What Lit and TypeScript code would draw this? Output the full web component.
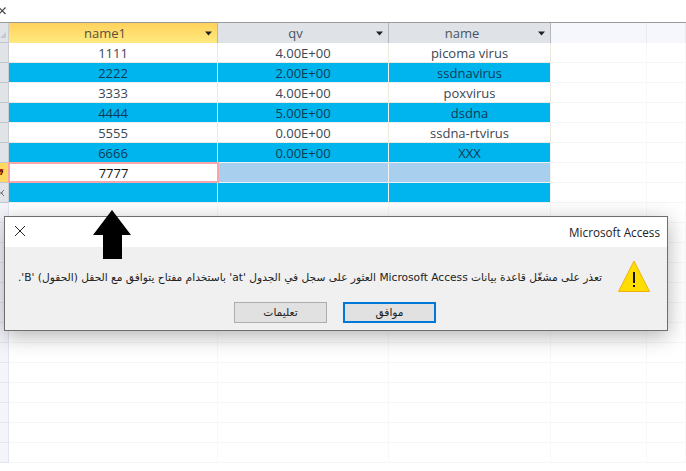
import { LitElement, html, css } from "lit";
import { customElement } from "lit/decorators.js";

const rows = [
  ["1111", "4.00E+00", "picoma virus"],
  ["2222", "2.00E+00", "ssdnavirus"],
  ["3333", "4.00E+00", "poxvirus"],
  ["4444", "5.00E+00", "dsdna"],
  ["5555", "0.00E+00", "ssdna-rtvirus"],
  ["6666", "0.00E+00", "XXX"],
];

@customElement("app-root")
export class AppRoot extends LitElement {
  static styles = css`
    :host { display: block; position: relative; width: 686px; height: 471px; overflow: hidden; background: #fff; font-family: "Open Sans", "Noto Sans", sans-serif; }
    .tab { height: 22px; display: flex; align-items: center; box-sizing: border-box; }
    .grid { border-top: 1px solid #9a9a9a; display: grid; grid-template-columns: 9px 209px 171px 162px 96px 1fr; grid-auto-rows: 20px; font-size: 13px; color: #3c4654; }
    .grid > div { box-sizing: border-box; display: flex; align-items: center; justify-content: center; white-space: nowrap; }
    .sel { background: #e0e3e8; border-bottom: 1px solid #c3c6cb; border-right: 1px solid #c9ccd1; justify-content: flex-start !important; }
    .selc { background: #f4f5fb; border-right: 1px solid #e4e5ee; border-bottom: 1px solid #e4e5ee; }
    .sel.cur { background: #ffd860; }
    .h { background: #dfe2e7; border-right: 1px solid #b4b7bc; position: relative; color: #4a5461; padding-right: 15px; }
    .h.active { background: linear-gradient(#ffd25c, #ffea80); color: #5a5040; padding-right: 16px; }
    .h.blank { background: #f6f7fd; border-right: 1px solid #e9eaf1; padding: 0; }
    .h svg { position: absolute; right: 5px; top: 8px; }
    .c { border-right: 1px solid #ece9df; border-bottom: 1px solid #ece9df; background: #fff; }
    .c.alt { background: #00b5ee; border-right-color: #f0f0f0; border-bottom-color: #f0f0f0; color: #0f3a55; }
    .e { border-right: 1px solid #f8f8f4; border-bottom: 1px solid #f6f6f2; }
    .c.edit { border: 2px solid #f7a6ab; color: #111; margin: -1px -1px 0 -1px; position: relative; z-index: 1; }
    .c.light { background: #a9cfef; border-right-color: #f0f0f0; border-bottom-color: #f0f0f0; }
    .dlg { position: absolute; left: 4px; top: 216px; width: 664px; height: 115px; box-sizing: border-box; border: 1px solid #6e6e6e; background: #f0f0f0; box-shadow: 0 5px 20px rgba(0,0,0,.3); display: flex; flex-direction: column; z-index: 2; }
    .title { height: 30px; background: #fff; display: flex; align-items: center; justify-content: space-between; padding: 0 7px 0 9px; font-size: 11.7px; color: #222; flex: none; }
    .title svg { margin-top: -2px; }
    .body { flex: 1; display: flex; flex-direction: row-reverse; align-items: center; padding: 3px 17px 0 0; gap: 16px; }
    .msg { direction: rtl; font-family: "DejaVu Sans", sans-serif; font-size: 10.65px; color: #222; white-space: nowrap; margin-top: 2px; }
    .btns { display: flex; justify-content: flex-end; gap: 16px; padding: 0 231px 7px 0; }
    .btn { width: 93px; height: 21px; box-sizing: border-box; background: #e1e1e1; border: 1px solid #adadad; font-family: "DejaVu Sans", sans-serif; font-size: 10.67px; color: #222; display: flex; align-items: center; justify-content: center; }
    .btn.def { border: 2px solid #0078d7; }
    .arrow { position: absolute; left: 93px; top: 210px; z-index: 3; }
  `;
  arrow() {
    return html`<svg width="7" height="5" viewBox="0 0 7 5"><path d="M0 .5h7L3.500 4.500z" fill="#222"/></svg>`;
  }
  render() {
    const blank = html`<div class="e"></div><div class="e"></div>`;
    return html`
      <div class="tab"><svg width="6" height="8" viewBox="0 0 6 8"><path d="M-1 .5 5.500 7M5.500 .5-1 7" stroke="#444" stroke-width="1.200" fill="none"/></svg></div>
      <div class="grid">
        <div class="sel"><svg width="6" height="12" viewBox="0 0 6 12"><path d="M0 11H6V5L0 11z" fill="#c6cad0"/></svg></div>
        <div class="h active">name1${this.arrow()}</div>
        <div class="h">qv${this.arrow()}</div>
        <div class="h">name${this.arrow()}</div>
        <div class="h blank"></div><div class="h blank"></div>
        ${rows.map((r, i) => html`
          <div class="sel"></div>
          ${r.map((t) => html`<div class="c ${i % 2 ? "alt" : ""}">${t}</div>`)}
          ${blank}`)}
        <div class="sel cur"><svg width="4" height="9" viewBox="0 0 4 9"><path d="M0 1h4L2 3H0z" fill="#c22"/><path d="M0 3h3L1 7H0z" fill="#f60"/><path d="M0 3h3M3 3 1 7" stroke="#111" fill="none"/></svg></div>
        <div class="c edit">7777</div><div class="c light"></div><div class="c light"></div>${blank}
        <div class="sel"><svg width="4" height="8" viewBox="0 0 4 8"><path d="M4 1 1 4 4 7M0 4h3" stroke="#777" fill="none"/></svg></div>
        <div class="c alt"></div><div class="c alt"></div><div class="c alt"></div>${blank}
        ${Array.from({ length: 13 }, () => html`<div class="selc"></div><div class="e"></div><div class="e"></div><div class="e"></div>${blank}`)}
      </div>
      <div class="dlg">
        <div class="title">
          <svg width="12" height="12" viewBox="0 0 12 12"><path d="M1 1 11 11M11 1 1 11" stroke="#222" stroke-width="1" fill="none"/></svg>
          <span>Microsoft Access</span>
        </div>
        <div class="body">
          <svg width="32" height="32" viewBox="0 0 32 32"><path d="M16 1 31.500 31.500H.5z" fill="#ffdd00" stroke="#f0b010"/><rect x="15" y="12" width="2" height="11" fill="#111"/><rect x="15" y="25" width="2" height="2" fill="#111"/></svg>
          <div class="msg">تعذر على مشغّل قاعدة بيانات Microsoft Access العثور على سجل في الجدول 'at' باستخدام مفتاح يتوافق مع الحقل (الحقول) 'B'.</div>
        </div>
        <div class="btns">
          <div class="btn">تعليمات</div>
          <div class="btn def">موافق</div>
        </div>
      </div>
      <svg class="arrow" width="38" height="49" viewBox="0 0 38 49"><path d="M19 0 38 25H29V49H10V25H0z" fill="#000"/></svg>
    `;
  }
}
